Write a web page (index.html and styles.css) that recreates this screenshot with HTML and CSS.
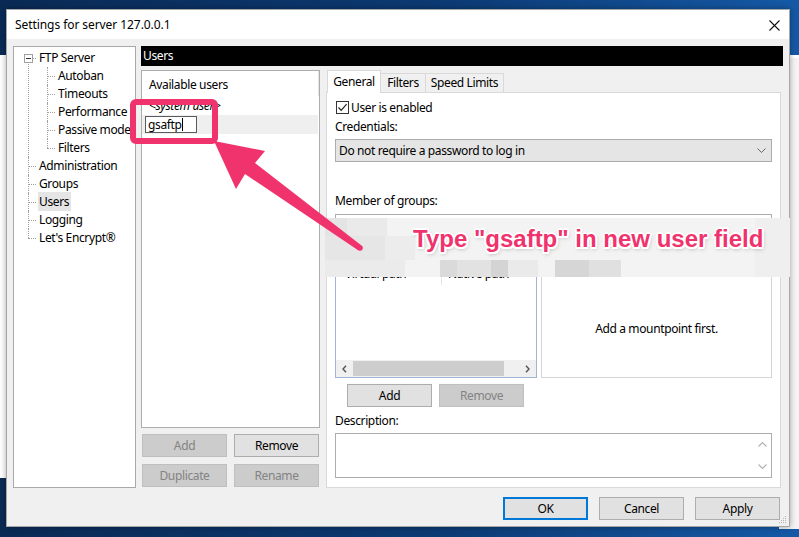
FILE: index.html
```html
<!DOCTYPE html>
<html>
<head>
<meta charset="utf-8">
<title>Settings for server 127.0.0.1</title>
<link rel="stylesheet" href="styles.css">
</head>
<body>
<div class="desktop">
  <div class="bgwin"></div>
  <div class="bgwin-r"></div>
  <div class="dialog">
    <div class="titlebar">
      <span class="title">Settings for server 127.0.0.1</span>
      <svg class="close" width="11" height="11" viewBox="0 0 11 11"><path d="M0.5 0.5L10.5 10.5M10.5 0.5L0.5 10.5" stroke="#111" stroke-width="1.1" fill="none"/></svg>
    </div>
    <div class="dlgbody">
      <div class="main">
        <div class="tree">
          <ul class="t0">
            <li class="root"><span class="exp"><span class="minus"></span></span><span class="lbl">FTP Server</span>
              <ul class="t1">
                <li><span class="lbl">Autoban</span></li>
                <li><span class="lbl">Timeouts</span></li>
                <li><span class="lbl">Performance</span></li>
                <li><span class="lbl">Passive mode</span></li>
                <li><span class="lbl">Filters</span></li>
              </ul>
            </li>
            <li><span class="lbl">Administration</span></li>
            <li><span class="lbl">Groups</span></li>
            <li><span class="lbl sel">Users</span></li>
            <li><span class="lbl">Logging</span></li>
            <li><span class="lbl">Let's Encrypt®</span></li>
          </ul>
        </div>
        <div class="page">
          <div class="pagehead">Users</div>
          <div class="pagecols">
            <div class="userscol">
              <div class="userlist">
                <div class="lvhead"><span class="lvcol">Available users</span></div>
                <div class="lvrow sys">&lt;system user&gt;</div>
                <div class="lvrow edit"><span class="editbox">gsaftp<span class="caret"></span></span></div>
              </div>
              <div class="btnrow"><button class="btn dis">Add</button><button class="btn">Remove</button></div>
              <div class="btnrow second"><button class="btn dis">Duplicate</button><button class="btn dis">Rename</button></div>
            </div>
            <div class="tabscol">
              <div class="tabs">
                <div class="tab sel">General</div>
                <div class="tab t-filters">Filters</div>
                <div class="tab t-speed">Speed Limits</div>
              </div>
              <div class="tabpanel">
                <div class="chk">
                  <span class="cbox"><svg width="11" height="11" viewBox="0 0 11 11"><path d="M1.5 5.5L4.2 8.3L9.6 2.2" stroke="#222" stroke-width="1.2" fill="none"/></svg></span>
                  <span>User is enabled</span>
                </div>
                <div class="flbl cred">Credentials:</div>
                <div class="combo"><span>Do not require a password to log in</span><svg width="9" height="5" viewBox="0 0 9 5"><path d="M0.5 0.5L4.5 4.5L8.5 0.5" stroke="#666" stroke-width="1" fill="none"/></svg></div>
                <div class="flbl grp">Member of groups:</div>
                <div class="groupbox"></div>
                <div class="mounts">
                  <div class="mountlist">
                    <div class="mhead"><span class="mc1">Virtual path</span><span class="mc2">Native path</span></div>
                    <div class="mbody"></div>
                    <div class="hscroll">
                      <span class="sarr"><svg width="5" height="8" viewBox="0 0 5 8"><path d="M4 0.8L1 4L4 7.2" stroke="#555" stroke-width="1.4" fill="none"/></svg></span>
                      <span class="thumb"></span>
                      <span class="sgap"></span>
                      <span class="sarr"><svg width="5" height="8" viewBox="0 0 5 8"><path d="M1 0.8L4 4L1 7.2" stroke="#555" stroke-width="1.4" fill="none"/></svg></span>
                    </div>
                  </div>
                  <div class="mountinfo">Add a mountpoint first.</div>
                </div>
                <div class="btnrow mbtns"><button class="btn">Add</button><button class="btn dis">Remove</button></div>
                <div class="flbl desc-l">Description:</div>
                <div class="desc">
                  <div class="vscroll">
                    <svg width="9" height="5" viewBox="0 0 9 5"><path d="M0.5 4.5L4.5 0.5L8.5 4.5" stroke="#b0b0b0" stroke-width="1.1" fill="none"/></svg>
                    <svg width="9" height="5" viewBox="0 0 9 5"><path d="M0.5 0.5L4.5 4.5L8.5 0.5" stroke="#b0b0b0" stroke-width="1.1" fill="none"/></svg>
                  </div>
                </div>
              </div>
            </div>
          </div>
        </div>
      </div>
      <div class="dlgbtns">
        <button class="btn ok">OK</button>
        <button class="btn">Cancel</button>
        <button class="btn">Apply</button>
      </div>
    </div>
    <svg class="grip" width="8" height="8" viewBox="0 0 8 8"><g fill="#b5b5b5"><rect x="6" y="0" width="1" height="1"/><rect x="4" y="2" width="1" height="1"/><rect x="6" y="2" width="1" height="1"/><rect x="2" y="4" width="1" height="1"/><rect x="4" y="4" width="1" height="1"/><rect x="6" y="4" width="1" height="1"/><rect x="0" y="6" width="1" height="1"/><rect x="2" y="6" width="1" height="1"/><rect x="4" y="6" width="1" height="1"/><rect x="6" y="6" width="1" height="1"/></g></svg>
  </div>

  <div class="blurband">
    <span class="blk b1"></span><span class="blk b2"></span><span class="blk b3"></span>
    <span class="blk b4"></span><span class="blk b5"></span><span class="blk b6"></span>
    <span class="blk b7"></span><span class="blk b8"></span><span class="blk b9"></span>
    <span class="blk b10"></span><span class="blk b11"></span><span class="blk b12"></span>
    <div class="callout">Type "gsaftp" in new user field</div>
  </div>

  <svg class="annot" width="799" height="537" viewBox="0 0 799 537">
    <polygon points="214,141 265,151 255,163 361.5,245.5 358.5,250.5 245,174 236,189" fill="#f0336d"/>
    <circle cx="360" cy="248" r="2.8" fill="#f0336d"/>
    <rect x="133" y="102" width="82" height="39" rx="3" ry="3" fill="none" stroke="#f0336d" stroke-width="6"/>
  </svg>
</div>
</body>
</html>
```

FILE: styles.css
```css
* { box-sizing: border-box; margin: 0; padding: 0; }
html, body { width: 799px; height: 537px; overflow: hidden; }
body {
  font-family: "Noto Sans", "Open Sans", sans-serif;
  font-size: 12px;
  letter-spacing: -0.37px;
  color: #000;
  background: linear-gradient(90deg, #0a2a55 0%, #0c3a73 55%, #1559a6 100%);
}
.desktop { position: relative; width: 799px; height: 537px; }

.bgwin { position: absolute; left: 0; top: 55px; width: 799px; height: 423px; background: #fff; }
.bgwin-r { position: absolute; right: 0; top: 57px; width: 20px; height: 472px; background: #f4f4f4; border-top: 1px solid #ffffff; }

.dialog {
  position: absolute; left: 6px; top: 9px; width: 784px; height: 518px;
  border: 1px solid #a6a6a6;
  background: #f0f0f0;
  display: flex; flex-direction: column;
  box-shadow: 0 0 6px rgba(0, 0, 0, 0.35);
}
.titlebar {
  height: 29px; background: #fff;
  display: flex; align-items: center; justify-content: space-between;
  padding: 0 9px 0 8px;
}
.title { font-size: 12px; line-height: 16px; padding-top: 1px; letter-spacing: -0.07px; }
.close { display: block; margin-top: 1px; }

.dlgbody { flex: 1; padding: 7px 6px 6px 6px; display: flex; flex-direction: column; }
.main { display: flex; gap: 5px; height: 442px; }

/* tree */
.tree { width: 123px; height: 442px; background: #fff; border: 1px solid #a9a9a9; padding-top: 2px; }
.tree ul { list-style: none; }
.t0 > li { position: relative; padding-left: 24px; line-height: 18px; }
.t0 > li::before { content: ""; position: absolute; left: 14px; top: 9px; width: 8px; border-top: 1px dotted #a0a0a0; }
.t0 > li::after { content: ""; position: absolute; left: 14px; top: 0; bottom: 0; border-left: 1px dotted #a0a0a0; }
.t0 > li:first-child::after { top: 9px; }
.t0 > li:last-child::after { bottom: auto; height: 9px; }
.exp {
  position: absolute; left: 10px; top: 5px; width: 9px; height: 9px;
  border: 1px solid #a0a0a0; background: #fff; z-index: 1;
  display: flex; align-items: center; justify-content: center;
}
.minus { width: 5px; height: 1px; background: #333; }
.lbl { padding: 0 1px; white-space: nowrap; }
.lbl.sel { background: #e5e5e5; padding: 1px 2px 1px 1px; }
.t1 { margin-left: 9px; }
.t1 > li { position: relative; padding-left: 10px; line-height: 18px; }
.t1 > li::before { content: ""; position: absolute; left: 0; top: 9px; width: 8px; border-top: 1px dotted #a0a0a0; }
.t1 > li::after { content: ""; position: absolute; left: 0; top: 0; bottom: 0; border-left: 1px dotted #a0a0a0; }
.t1 > li:last-child::after { bottom: auto; height: 9px; }

/* page */
.page { flex: 1; display: flex; flex-direction: column; }
.pagehead { height: 20px; background: #000; color: #fff; line-height: 20px; padding-left: 2px; }
.pagecols { display: flex; gap: 6px; margin-top: 4px; height: 418px; }

.userscol { width: 179px; }
.userlist { height: 358px; background: #fff; border: 1px solid #adadad; }
.lvhead { height: 26px; }
.lvcol { display: block; width: 177px; height: 25px; line-height: 27px; padding-left: 7px; border-right: 1px solid #e5e5e5; }
.lvrow { height: 18px; line-height: 18px; padding-left: 7px; width: 176px; }
.lvrow.sys { font-style: italic; }
.lvrow.edit { height: 19px; background: #efefef; padding-left: 3px; padding-top: 1px; }
.editbox {
  display: flex; align-items: center; width: 52px; height: 17px;
  border: 1px solid #5a5a5a; background: #fff; padding-left: 2px; line-height: 15px;
}
.caret { display: inline-block; width: 1px; height: 13px; background: #000; margin-left: 1px; }

.btnrow { display: flex; gap: 7px; margin-top: 6px; padding-left: 1px; }
.btnrow.second { margin-top: 7px; }
.btn {
  width: 85px; height: 23px;
  font-family: inherit; font-size: 12px; letter-spacing: -0.37px; color: #000;
  background: #e1e1e1; border: 1px solid #adadad;
  display: flex; align-items: center; justify-content: center;
  padding: 0 0 1px 0;
}
.btn.dis { background: #cccccc; border-color: #bfbfbf; color: #838383; }

/* tabs */
.tabscol { width: 455px; display: flex; flex-direction: column; }
.tabs { display: flex; height: 22px; padding-left: 1px; position: relative; z-index: 1; }
.tab {
  height: 19px; margin-top: 3px; border: 1px solid #d9d9d9; border-bottom: none;
  background: #f0f0f0; text-align: center; line-height: 18px;
}
.tab.sel { width: 54px; height: 23px; margin-top: 0; background: #fff; line-height: 21px; }
.t-filters { width: 46px; margin-left: -1px; }
.t-speed { width: 79px; margin-left: -1px; }
.tabpanel {
  height: 396px; background: #fff; border: 1px solid #d9d9d9;
  padding: 7px 8px 0 8px;
}
.chk { height: 14px; display: flex; align-items: center; gap: 2px; padding-left: 1px; }
.cbox { width: 13px; height: 13px; border: 1px solid #333; background: #fff; display: flex; align-items: center; justify-content: center; }
.cbox svg { display: block; }
.flbl { line-height: 16px; height: 16px; }
.cred { margin-top: 5px; }
.combo {
  margin-top: 4px; height: 23px; background: #e5e5e5; border: 1px solid #acacac;
  display: flex; align-items: center; justify-content: space-between; padding: 0 4px 1px 3px;
}
.combo svg { display: block; margin-right: 1px; }
.grp { margin-top: 31px; }
.groupbox { margin-top: 5px; height: 42px; border: 1px solid #adadad; background: #fff; }
.mounts { margin-top: 6px; height: 116px; display: flex; gap: 4px; }
.mountlist { width: 202px; border: 1px solid #9fb5d8; display: flex; flex-direction: column; }
.mhead { height: 22px; display: flex; line-height: 22px; }
.mc1 { width: 106px; padding-left: 9px; border-right: 1px solid #e5e5e5; }
.mc2 { padding-left: 6px; }
.mbody { flex: 1; }
.hscroll { height: 17px; background: #f0f0f0; display: flex; align-items: stretch; }
.sarr { width: 17px; display: flex; align-items: center; justify-content: center; }
.sarr svg { display: block; }
.thumb { width: 151px; margin: 1px 0; background: #cdcdcd; }
.sgap { flex: 1; }
.mountinfo {
  flex: 1; border: 1px solid #d5d5d5;
  display: flex; align-items: center; justify-content: center; padding-top: 16px;
}
.mbtns { margin-top: 6px; padding-left: 12px; }
.desc-l { margin-top: 6px; }
.desc { margin-top: 4px; height: 45px; border: 1px solid #adadad; display: flex; justify-content: flex-end; }
.vscroll { width: 17px; display: flex; flex-direction: column; align-items: center; justify-content: space-between; padding: 8px 0 8px 0; }
.vscroll svg { display: block; }

.dlgbtns { display: flex; justify-content: flex-end; gap: 11px; margin-top: 9px; padding-right: 3px; }
.btn.ok { border: 1px solid #0078d7; box-shadow: inset 0 0 0 1px #0078d7; }

.grip { position: absolute; right: 2px; bottom: 2px; display: block; }

/* annotation overlay */
.blurband {
  position: absolute; left: 325px; top: 218px; width: 465px; height: 59px;
  background: #f3f3f3;
}
.blk { position: absolute; display: block; }
.b1 { left: 0; top: 0; width: 22px; height: 18px; background: #e4e4e4; }
.b2 { left: 0; top: 18px; width: 60px; height: 24px; background: #e6e6e6; }
.b3 { left: 22px; top: 0; width: 40px; height: 18px; background: #eaeaea; }
.b4 { left: 60px; top: 18px; width: 30px; height: 24px; background: #ececec; }
.b5 { left: 0; top: 42px; width: 80px; height: 17px; background: #ebebeb; }
.b6 { left: 115px; top: 42px; width: 17px; height: 17px; background: #dadada; }
.b7 { left: 132px; top: 42px; width: 34px; height: 17px; background: #e2e2e2; }
.b8 { left: 166px; top: 42px; width: 17px; height: 17px; background: #d4d4d4; }
.b9 { left: 183px; top: 42px; width: 30px; height: 17px; background: #eaeaea; }
.b10 { left: 230px; top: 42px; width: 34px; height: 17px; background: #d6d6d6; }
.b11 { left: 264px; top: 42px; width: 32px; height: 17px; background: #e0e0e0; }
.b12 { left: 430px; top: 0; width: 35px; height: 59px; background: #efefef; }
.callout {
  position: absolute; left: 88px; top: 9px;
  font-family: "Liberation Sans", Arial, sans-serif; font-weight: bold;
  font-size: 24px; line-height: 24px; white-space: nowrap; letter-spacing: 0;
  color: #f0336d;
  text-shadow:
    -2px 0 #fff, 2px 0 #fff, 0 -2px #fff, 0 2px #fff,
    -1.5px -1.5px #fff, 1.5px 1.5px #fff, -1.5px 1.5px #fff, 1.5px -1.5px #fff,
    1px 2px 4px rgba(0, 0, 0, 0.35);
}
.annot { position: absolute; left: 0; top: 0; pointer-events: none; }
```
